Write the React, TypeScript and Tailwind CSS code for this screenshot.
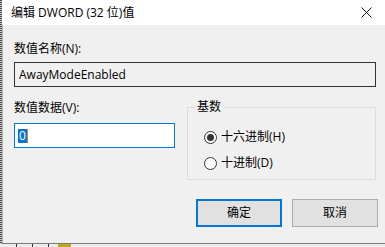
import React from "react";

const font = { fontFamily: "'Open Sans', 'Noto Sans CJK SC', sans-serif" };

function Radio({ checked, label }: { checked?: boolean; label: string }) {
  return (
    <div className="flex items-center h-[18px]">
      <div className="w-[13px] h-[13px] rounded-full border border-[#333] bg-white flex items-center justify-center">
        {checked && <div className="w-[7px] h-[7px] rounded-full bg-[#333]" />}
      </div>
      <span className="ml-[4px] text-[12px] leading-[18px] text-black">{label}</span>
    </div>
  );
}

export default function App() {
  return (
    <div className="w-[385px] h-[247px] flex flex-col bg-[#e6e6e6] overflow-hidden" style={font}>
      <div className="flex h-[244px]">
        <div className="w-[2px] h-full bg-[repeating-linear-gradient(to_bottom,#4a4a4a_0px,#4a4a4a_1px,#c8c8c8_1px,#c8c8c8_2px)]" />
        <div className="flex-1 flex flex-col border-b border-[#7a7a7a]">
          <div className="h-[25px] bg-white flex items-center justify-between pl-[9px] pr-[12px]">
            <span className="text-[12px] text-black leading-[16px]">编辑 DWORD (32 位)值</span>
            <svg width="11" height="11" viewBox="0 0 11 11" className="mr-[1px]">
              <path d="M0.5 0.5 L10.5 10.5 M10.5 0.5 L0.5 10.5" stroke="#111" strokeWidth="1" />
            </svg>
          </div>
          <div className="flex-1 bg-[#f0f0f0] border-l border-[#b4b4b4] pl-[11px] pr-[6px] pt-[15px] flex flex-col">
            <div className="text-[12px] leading-[18px] text-black">数值名称(N):</div>
            <div className="mt-[4px] w-[362px] h-[25px] border border-[#333] bg-[#f0f0f0] flex items-center pl-[4px]">
              <span className="text-[12px] leading-[16px] text-black">AwayModeEnabled</span>
            </div>
            <div className="flex mt-[12px]">
              <div className="flex flex-col w-[161px]">
                <div className="text-[12px] leading-[18px] text-black">数值数据(V):</div>
                <div className="mt-[6px] w-[161px] h-[25px] border border-[#0078d7] bg-white flex items-center pl-[3px]">
                  <span className="bg-[#0078d7] text-white text-[12px] leading-[14px] px-[1px]">0</span>
                  <span className="w-[1px] h-[14px] bg-[#e07a30]" />
                </div>
              </div>
              <fieldset className="ml-[12px] w-[189px] h-[82px] border border-[#dcdcdc] -mt-[1px]">
                <legend className="ml-[7px] px-[2px] text-[12px] leading-[18px] text-black">基数</legend>
                <div className="mt-[12px] pl-[16px] flex flex-col gap-[8px]">
                  <Radio checked label="十六进制(H)" />
                  <Radio label="十进制(D)" />
                </div>
              </fieldset>
            </div>
            <div className="flex justify-end gap-[10px] mt-[19px] pr-[1px]">
              <button className="w-[86px] h-[28px] border-2 border-[#0078d7] bg-[#e1e1e1] text-[12px] text-black">确定</button>
              <button className="w-[86px] h-[28px] border border-[#adadad] bg-[#e1e1e1] text-[12px] text-black">取消</button>
            </div>
          </div>
        </div>
      </div>
      <div className="relative h-[3px] bg-[#ececec]">
        <div className="absolute left-[16px] top-0 w-[1px] h-[3px] bg-[#333]" />
        <div className="absolute left-[32px] top-0 w-[1px] h-[3px] bg-[#333]" />
        <div className="absolute left-[48px] top-0 w-[1px] h-[3px] bg-[#333]" />
        <div className="absolute left-[58px] top-0 w-[13px] h-[3px] bg-[#c2a62a]" />
      </div>
    </div>
  );
}
